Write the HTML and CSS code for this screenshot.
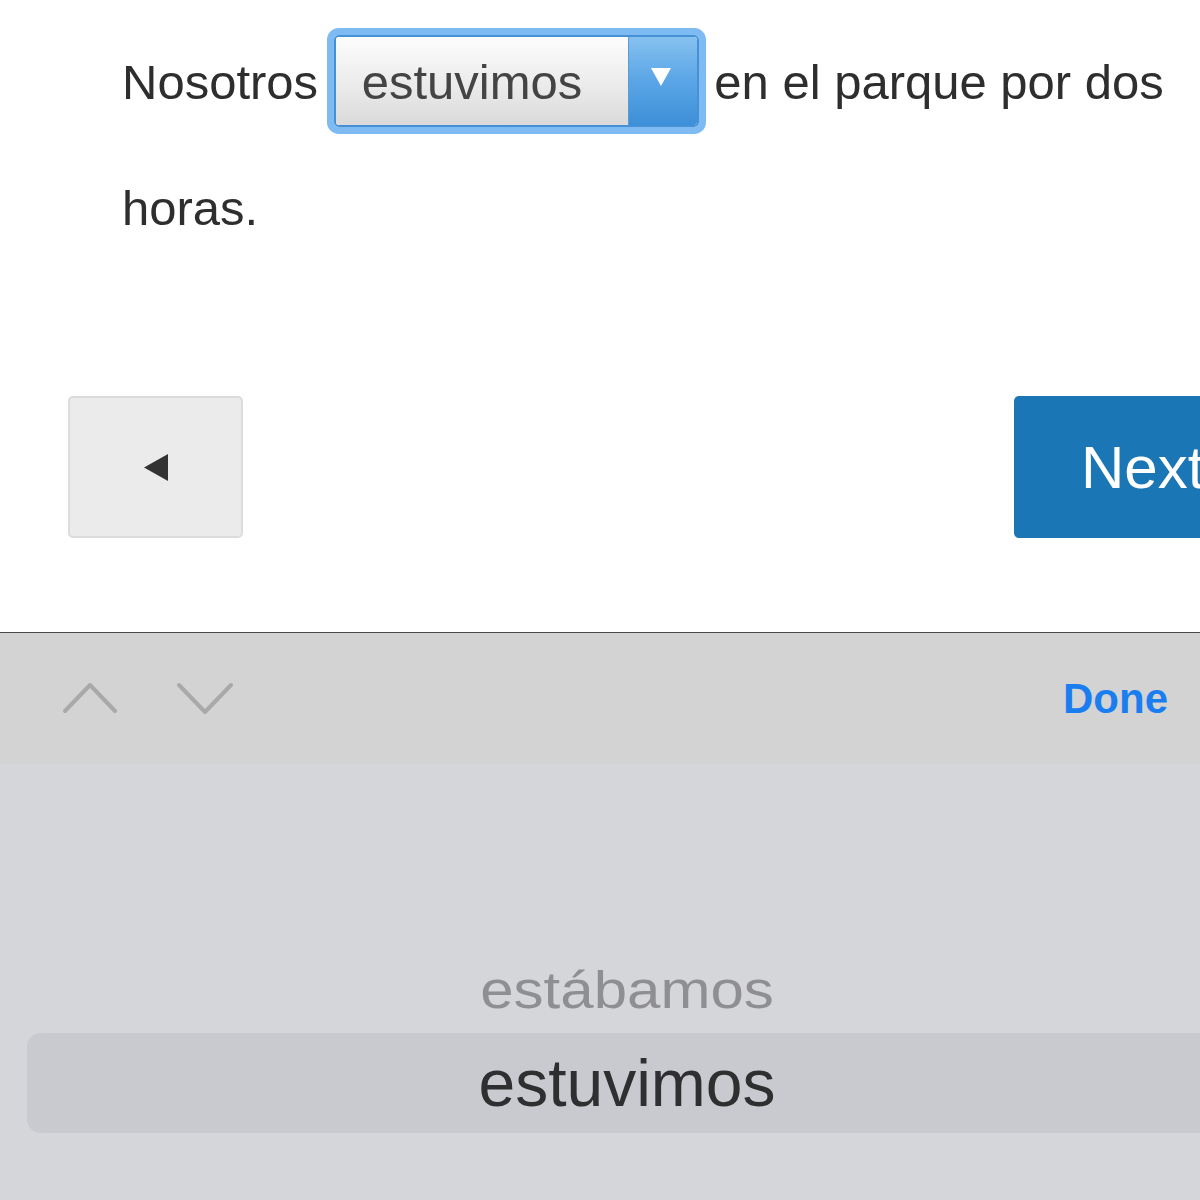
FILE: index.html
```html
<!DOCTYPE html>
<html lang="es">
<head>
  <meta charset="UTF-8" />
  <meta name="viewport" content="width=device-width, initial-scale=1.0"/>
  <title>Ejercicio</title>
  <link rel="stylesheet" href="styles.css">
</head>
<body>

<main class="quiz">
  <p class="sentence">
    Nosotros
    <span class="dropdown">
      <span class="dropdown-value">estuvimos</span>
      <span class="dropdown-arrow">
        <svg width="22" height="20" viewBox="0 0 22 20"><polygon points="1,1 21,1 11,19" fill="#fff"/></svg>
      </span>
    </span>
    en el parque por dos horas.
  </p>

  <div class="nav-row">
    <button class="btn-back" aria-label="Anterior">
      <svg width="24" height="27" viewBox="0 0 24 27"><polygon points="24,0 24,27 0,13.5" fill="#333"/></svg>
    </button>
    <button class="btn-next">Next</button>
  </div>
</main>

<!-- Barra del teclado + selector -->
<section class="accessory">
  <div class="toolbar">
    <div class="arrows">
      <svg class="chev" width="60" height="36" viewBox="0 0 60 36"><polyline points="3,30 28,4 53,30" fill="none" stroke="#a9a9a9" stroke-width="4" stroke-linecap="round" stroke-linejoin="round"/></svg>
      <svg class="chev" width="60" height="36" viewBox="0 0 60 36"><polyline points="3,4 29,31 55,4" fill="none" stroke="#a9a9a9" stroke-width="4" stroke-linecap="round" stroke-linejoin="round"/></svg>
    </div>
    <span class="done">Done</span>
  </div>

  <div class="picker">
    <div class="picker-item">estábamos</div>
    <div class="picker-item selected">estuvimos</div>
  </div>
</section>

</body>
</html>
```

FILE: styles.css
```css
html, body {
  margin: 0;
  padding: 0;
  height: 1200px;
  overflow: hidden;
  background: #fff;
  font-family: "Liberation Sans", Arial, sans-serif;
}
.quiz {
  height: 632px;
  overflow: hidden;
}
.sentence {
  margin: 0;
  padding: 19px 30px 0 122px;
  font-size: 49px;
  line-height: 126px;
  color: #2e2e2e;
}
.dropdown {
  display: inline-flex;
  height: 92px;
  box-sizing: border-box;
  margin: 0 2px;
  border: 2px solid #4690d6;
  border-radius: 5px;
  box-shadow: 0 0 0 7px #7fbbf3;
  overflow: hidden;
  vertical-align: baseline;
}
.dropdown-value {
  width: 266px;
  padding: 2px 0 0 26px;
  line-height: 86px;
  color: #444;
  background: linear-gradient(#fdfdfd, #e9e9e9 60%, #dadada);
}
.dropdown-arrow {
  width: 69px;
  display: flex;
  justify-content: center;
  padding: 30px 4px 0 0;
  box-sizing: border-box;
  background: linear-gradient(#86c1ef, #5aa5e6 50%, #3d8fd8);
  border-left: 1px solid #5d9bd3;
}
.dropdown-arrow svg {
  display: block;
}
.nav-row {
  display: flex;
  justify-content: space-between;
  margin: 125px -70px 0 0;
  padding-left: 68px;
  height: 142px;
}
.btn-back {
  width: 175px;
  height: 142px;
  padding: 0;
  border: 2px solid #dcdcdc;
  border-radius: 5px;
  background: #ebebeb;
  display: flex;
  align-items: center;
  justify-content: center;
}
.btn-next {
  width: 256px;
  height: 142px;
  border: none;
  border-radius: 5px;
  background: #1a76b4;
  color: #fff;
  font-family: "Liberation Sans", Arial, sans-serif;
  font-size: 60px;
  text-align: left;
  padding: 0 0 0 67px;
}
.accessory {
  border-top: 1px solid #4a4a4a;
}
.toolbar {
  height: 131px;
  background: #d3d3d3;
  display: flex;
  align-items: center;
  justify-content: space-between;
  padding: 0 32px 0 62px;
}
.arrows {
  display: flex;
  gap: 54px;
}
.chev {
  display: block;
}
.done {
  color: #1b7ef0;
  font-weight: bold;
  font-size: 42px;
}
.picker {
  height: 436px;
  background: #d5d6da;
  padding: 179px 0 0 27px;
  box-sizing: border-box;
}
.picker-item {
  width: 1200px;
  text-align: center;
  height: 90px;
  line-height: 90px;
  font-size: 60px;
  color: #8f8f93;
  transform: scaleY(0.85);
  transform-origin: 50% 72%;
}
.picker-item.selected {
  height: 100px;
  line-height: 100px;
  font-size: 66px;
  color: #2f2f31;
  background: #c9cacf;
  border-radius: 14px;
  transform: none;
}
```
